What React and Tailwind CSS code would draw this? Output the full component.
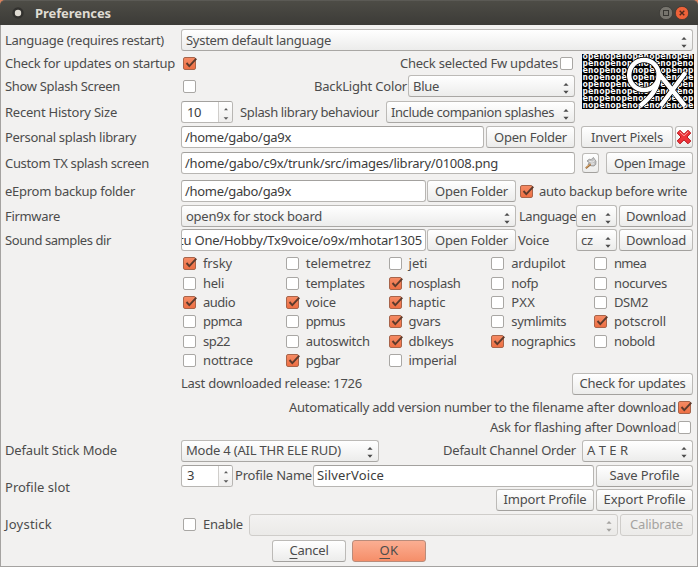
import { useLayoutEffect, useRef } from "react";

/* Single line label, tracked so that it fills exactly `w` pixels. */
function T({ w, children, className = "", u = false }) {
  const ref = useRef(null);
  useLayoutEffect(() => {
    const el = ref.current;
    el.style.letterSpacing = "0px";
    const natural = el.getBoundingClientRect().width;
    const n = el.textContent.length;
    el.style.letterSpacing = (w - natural) / n + "px";
  }, [w]);
  return (
    <span ref={ref} className={"inline-block shrink-0 whitespace-pre leading-none " + className}>
      {u ? (
        <>
          <span className="underline underline-offset-[3px]">{children[0]}</span>
          {children.slice(1)}
        </>
      ) : (
        children
      )}
    </span>
  );
}

function Row({ className = "", label, w, children }) {
  return (
    <div className={"flex h-[22px] items-center " + className}>
      <div className="flex w-[176px] shrink-0">{label && <T w={w}>{label}</T>}</div>
      {children}
    </div>
  );
}

function Arrows({ className = "" }) {
  return (
    <svg viewBox="0 0 6 12" className={"h-3 w-1.5 shrink-0 " + className} fill="currentColor">
      <path d="M0.4 3.8 3 0.9 5.6 3.8ZM0.4 8.8 3 11.7 5.6 8.8Z" />
    </svg>
  );
}

function Combo({ className = "", text, w, disabled }) {
  return (
    <div
      className={
        "flex h-[22px] shrink-0 items-center justify-between rounded-[3px] border pr-[5px] pl-1 " +
        (disabled
          ? "border-[#cfcdca] bg-gradient-to-b from-[#f3f2f1] to-[#ebeae8] text-[#a5a3a0] "
          : "border-[#bcbab7] border-b-[#a9a7a4] bg-gradient-to-b from-white to-[#ececeb] text-[#4c4c4c] ") +
        className
      }
    >
      {text ? <T w={w}>{text}</T> : <span />}
      <Arrows className="mt-[3px]" />
    </div>
  );
}

function Input({ className = "", text, w }) {
  return (
    <div
      className={
        "flex h-[22px] shrink-0 items-center overflow-hidden rounded-[3px] border border-[#b8b6b3] border-t-[#a3a19e] bg-white px-[3px] text-[#3c3c3c] " +
        className
      }
    >
      <T w={w}>{text}</T>
    </div>
  );
}

function Button({ className = "", text, w, disabled, primary, u }) {
  return (
    <button
      className={
        "flex h-[22px] shrink-0 items-center justify-center rounded-[3px] border " +
        (disabled
          ? "border-[#cfcdca] bg-gradient-to-b from-[#f3f2f1] to-[#ecebe9] text-[#a5a3a0] "
          : primary
            ? "border-[#b98c7b] bg-gradient-to-b from-[#fbae92] to-[#f58e69] text-[#4c4c4c] "
            : "border-[#bcbab7] border-b-[#a3a19e] bg-gradient-to-b from-white to-[#ececeb] text-[#4c4c4c] ") +
        className
      }
    >
      <T w={w} u={u}>{text}</T>
    </button>
  );
}

function Check({ on, className = "" }) {
  return (
    <span
      className={
        "relative block size-[13px] shrink-0 rounded-[2px] border " +
        (on ? "border-[#a8644a] bg-gradient-to-b from-[#f58a63] to-[#ee6f43] " : "border-[#a9a7a4] bg-white ") +
        className
      }
    >
      {on && (
        <svg viewBox="0 0 14 13" className="absolute -top-px -left-px h-[13px] w-[15px]" fill="none">
          <path d="M3 6 5.8 9.2 12.8 1.6" stroke="#5c3a2c" strokeWidth="1.9" />
        </svg>
      )}
    </span>
  );
}

function Spin({ value, w }) {
  return (
    <div className="flex h-[22px] w-[52px] shrink-0 overflow-hidden rounded-[3px] border border-[#b8b6b3] border-t-[#a3a19e] bg-white text-[#3c3c3c]">
      <div className="flex w-[36px] items-center pl-[5px]">
        <T w={w}>{value}</T>
      </div>
      <div className="flex flex-1 items-center justify-center border-l border-[#d0cecb] bg-gradient-to-b from-white to-[#eeedec]">
        <svg viewBox="0 0 6 13" className="mt-0.5 h-[13px] w-1.5" fill="#5c5c5c">
          <path d="M1 3.2 3 1 5 3.2ZM0.6 10.2 3 12.8 5.4 10.2Z" />
        </svg>
      </div>
    </div>
  );
}

const splashLines = [
  "openopenopenopenopen",
  "penopenopenopenopeno",
  "enopenopenopenopenop",
  "nopenopenopenopenope",
];

function Splash() {
  return (
    <svg viewBox="0 0 112 55" className="h-[55px] w-[112px] bg-black">
      <g fill="#fff" fontFamily="'DejaVu Sans Mono',monospace" fontWeight="700" fontSize="9">
        {[0, 1, 2, 3, 4, 5, 6, 7].map((i) => (
          <text key={i} x="0.5" y={5.3 + i * 6.9} textLength="111" lengthAdjust="spacing">
            {splashLines[i % 4]}
          </text>
        ))}
      </g>
      <g fill="none" stroke="#000" strokeWidth="5.8">
        <ellipse cx="62" cy="21" rx="14.8" ry="15" />
        <path d="M76.8 21C76.8 34 69 43 58 52M76 18.5 103 52M103.5 18.5 78.5 52" />
      </g>
      <g fill="none" stroke="#fff" strokeWidth="4.5">
        <ellipse cx="62" cy="21" rx="14.8" ry="15" />
        <path d="M76.8 21C76.8 34 69 43 58 52M76 18.5 103 52M103.5 18.5 78.5 52" />
      </g>
    </svg>
  );
}

const options = [
  ["frsky", 29, 1], ["telemetrez", 65, 0], ["jeti", 19, 0], ["ardupilot", 54, 0], ["nmea", 32, 0],
  ["heli", 21, 0], ["templates", 59, 0], ["nosplash", 52, 1], ["nofp", 27, 0], ["nocurves", 53, 0],
  ["audio", 32, 1], ["voice", 30, 1], ["haptic", 37, 1], ["PXX", 24, 0], ["DSM2", 34, 0],
  ["ppmca", 39, 0], ["ppmus", 39, 0], ["gvars", 32, 1], ["symlimits", 55, 0], ["potscroll", 52, 1],
  ["sp22", 27, 0], ["autoswitch", 64, 0], ["dblkeys", 45, 1], ["nographics", 64, 1], ["nobold", 41, 0],
  ["nottrace", 50, 0], ["pgbar", 34, 1], ["imperial", 48, 0],
];

export default function App() {
  return (
    <div className="h-[567px] w-[698px] overflow-hidden bg-[#d9825e] font-['Noto_Sans','Open_Sans',sans-serif] text-[13px] text-[#4c4c4c]">
      <header className="flex h-[25px] items-center rounded-t-[5px] border-t border-[#5b5a55] bg-gradient-to-b from-[#4d4c46] to-[#3c3b37]">
        <svg viewBox="0 0 12 12" className="ml-3 size-3">
          <circle cx="6" cy="6" r="5.7" fill="#32312e" />
          <circle cx="6" cy="6" r="3.2" fill="#dfdbd2" />
        </svg>
        <T w={76} className="ml-[11px] font-bold text-[#dfdbd2]">Preferences</T>
        <svg viewBox="0 0 32 14" className="mr-[8px] ml-auto h-[14px] w-8">
          <circle cx="8" cy="7" r="6.6" fill="#77756e" stroke="#302f2b" strokeWidth=".6" />
          <rect x="5.5" y="4.5" width="5" height="5" fill="none" stroke="#373632" />
          <circle cx="24" cy="7" r="6.6" fill="#ee6239" stroke="#302f2b" strokeWidth=".6" />
          <path d="m21.7 4.7 4.6 4.6m0-4.6-4.6 4.6" stroke="#50291c" strokeWidth="1.4" />
        </svg>
      </header>

      <main className="h-[542px] border border-t-0 border-[#a5a3a1] bg-[#f2f1f0] pl-1">
        <Row className="pt-1 h-[26px]" label="Language (requires restart)" w={159}>
          <Combo className="w-[512px]" text="System default language" w={145} />
        </Row>

        <div className="mt-px flex">
          <div className="w-[570px] shrink-0">
            <Row label="Check for updates on startup" w={170}>
              <Check on className="ml-[2px]" />
              <T w={158} className="ml-[204px]">Check selected Fw updates</T>
              <Check className="ml-[2px]" />
            </Row>
            <Row className="mt-px" label="Show Splash Screen" w={115}>
              <Check className="ml-[2px]" />
              <T w={93} className="ml-[118px]">BackLight Color</T>
              <Combo className="ml-px w-[167px]" text="Blue" w={26} />
            </Row>
            <Row className="mt-1" label="Recent History Size" w={112}>
              <Spin value="10" w={14} />
              <T w={139} className="ml-[7px]">Splash library behaviour</T>
              <Combo className="ml-[7px] w-[189px]" text="Include companion splashes" w={163} />
            </Row>
          </div>
          <div className="mt-[2px] ml-[7px] h-[55px]">
            <Splash />
          </div>
        </div>

        <Row className="mt-[3px]" label="Personal splash library" w={131}>
          <Input className="w-[303px]" text="/home/gabo/ga9x" w={106} />
          <Button className="ml-[2px] w-[89px]" text="Open Folder" w={73} />
          <Button className="ml-[6px] w-[92px]" text="Invert Pixels" w={72} />
          <button className="ml-[2px] flex h-[22px] w-[18px] items-center justify-center rounded-[3px] border border-[#bcbab7] border-b-[#a3a19e] bg-gradient-to-b from-white to-[#ececeb]">
            <svg viewBox="0 0 16 16" className="size-4 shrink-0">
              <path d="M4 1.3 8 5.2 12 1.3 14.8 4 11 8 14.8 12 12 14.8 8 10.9 4 14.8 1.2 12 5 8 1.2 4Z" fill="#ee3339" stroke="#b9191f" strokeLinejoin="round" />
              <path d="M3.8 2.8 8 6.8 12.2 2.8" fill="none" stroke="#ff9d9d" />
            </svg>
          </button>
        </Row>
        <Row className="mt-1" label="Custom TX splash screen" w={144}>
          <Input className="w-[394px]" text="/home/gabo/c9x/trunk/src/images/library/01008.png" w={313} />
          <button className="ml-[7px] flex h-[20px] w-[17px] items-center justify-center rounded-[3px] border border-[#bcbab7] border-b-[#a3a19e] bg-gradient-to-b from-white to-[#ececeb]">
            <svg viewBox="0 0 14 14" className="size-[14px] shrink-0">
              <path d="M3 5 5.2 3.2 7 3.8 9.4 1.4 10.6 3.2 12 5.2 11.8 8.4 10 10 7 9.8 4 8.6 5.2 6.6Z" fill="#c2c2c2" stroke="#858585" strokeWidth=".7" />
              <path d="m5.2 5.3 3 .8 2.3-1.5M7 8.2l3-.4" stroke="#eee" fill="none" />
              <path d="m6.6 8.2-4.8 4" stroke="#9c6c3d" strokeWidth="1.8" />
              <path d="m6.3 8.1-4.5 3.6" stroke="#e4b06c" strokeWidth=".8" />
            </svg>
          </button>
          <Button className="ml-[7px] w-[87px]" text="Open Image" w={71} />
        </Row>
        <Row className="mt-[6px]" label="eEprom backup folder" w={130}>
          <Input className="w-[245px]" text="/home/gabo/ga9x" w={106} />
          <Button className="ml-px w-[89px]" text="Open Folder" w={73} />
          <Check on className="ml-1" />
          <T w={148} className="ml-[6px]">auto backup before write</T>
        </Row>
        <Row className="mt-[3px]" label="Firmware" w={55}>
          <Combo className="w-[335px]" text="open9x for stock board" w={136} />
          <T w={57} className="ml-[3px]">Language</T>
          <Combo className="w-[41px]" text="en" w={15} />
          <Button className="ml-[2px] w-[74px]" text="Download" w={60} />
        </Row>
        <Row className="mt-[2px]" label="Sound samples dir" w={106}>
          <Input className="w-[245px] justify-end" text="tu One/Hobby/Tx9voice/o9x/mhotar1305" w={243} />
          <Button className="ml-px w-[89px]" text="Open Folder" w={73} />
          <T w={31} className="ml-[2px]">Voice</T>
          <Combo className="ml-[27px] w-[41px]" text="cz" w={12} />
          <Button className="ml-[2px] w-[74px]" text="Download" w={60} />
        </Row>

        <div className="mt-[3px] ml-[178px] grid w-[514px] auto-rows-[19.4px] grid-cols-[repeat(5,102.75px)]">
          {options.map(([name, w, on]) => (
            <div key={name} className="flex items-center">
              <Check on={!!on} />
              <T w={w} className="ml-[7px]">{name}</T>
            </div>
          ))}
        </div>

        <Row className="mt-[2.6px]">
          <T w={181}>Last downloaded release: 1726</T>
          <Button className="ml-[210px] w-[121px]" text="Check for updates" w={106} />
        </Row>
        <div className="mt-[3px] flex h-5 items-center justify-end pr-[6px]">
          <T w={387}>Automatically add version number to the filename after download</T>
          <Check on className="ml-[2px]" />
        </div>
        <div className="flex h-5 items-center justify-end pr-[6px]">
          <T w={186}>Ask for flashing after Download</T>
          <Check className="ml-[2px]" />
        </div>

        <Row className="mt-[2px]" label="Default Stick Mode" w={112}>
          <Combo className="w-[198px]" text="Mode 4 (AIL THR ELE RUD)" w={155} />
          <T w={133} className="ml-[64px]">Default Channel Order</T>
          <Combo className="ml-[6px] w-[111px]" text="A T E R" w={41} />
        </Row>

        <div className="mt-[3px] flex h-[46px] items-center">
          <div className="flex w-[176px] shrink-0"><T w={65}>Profile slot</T></div>
          <div className="flex w-[512px] flex-col gap-[2px]">
            <div className="flex items-center">
              <Spin value="3" w={7} />
              <T w={77} className="ml-[2px]">Profile Name</T>
              <Input className="ml-px w-[281px]" text="SilverVoice" w={67} />
              <Button className="ml-[2px] w-[97px]" text="Save Profile" w={70} />
            </div>
            <div className="flex justify-end gap-[2px]">
              <Button className="w-[98px]" text="Import Profile" w={83} />
              <Button className="w-[97px]" text="Export Profile" w={82} />
            </div>
          </div>
        </div>

        <Row className="mt-[3px]" label="Joystick" w={47}>
          <Check className="ml-[2px]" />
          <T w={40} className="ml-[7px]">Enable</T>
          <Combo className="ml-[6px] w-[369px]" disabled />
          <Button className="ml-[2px] w-[73px]" text="Calibrate" w={53} disabled />
        </Row>

        <div className="mt-1 ml-[267px] flex gap-[6px]">
          <Button className="w-[74px]" text="Cancel" w={39} u />
          <Button className="w-[74px]" text="OK" w={19} u primary />
        </div>
      </main>
    </div>
  );
}
